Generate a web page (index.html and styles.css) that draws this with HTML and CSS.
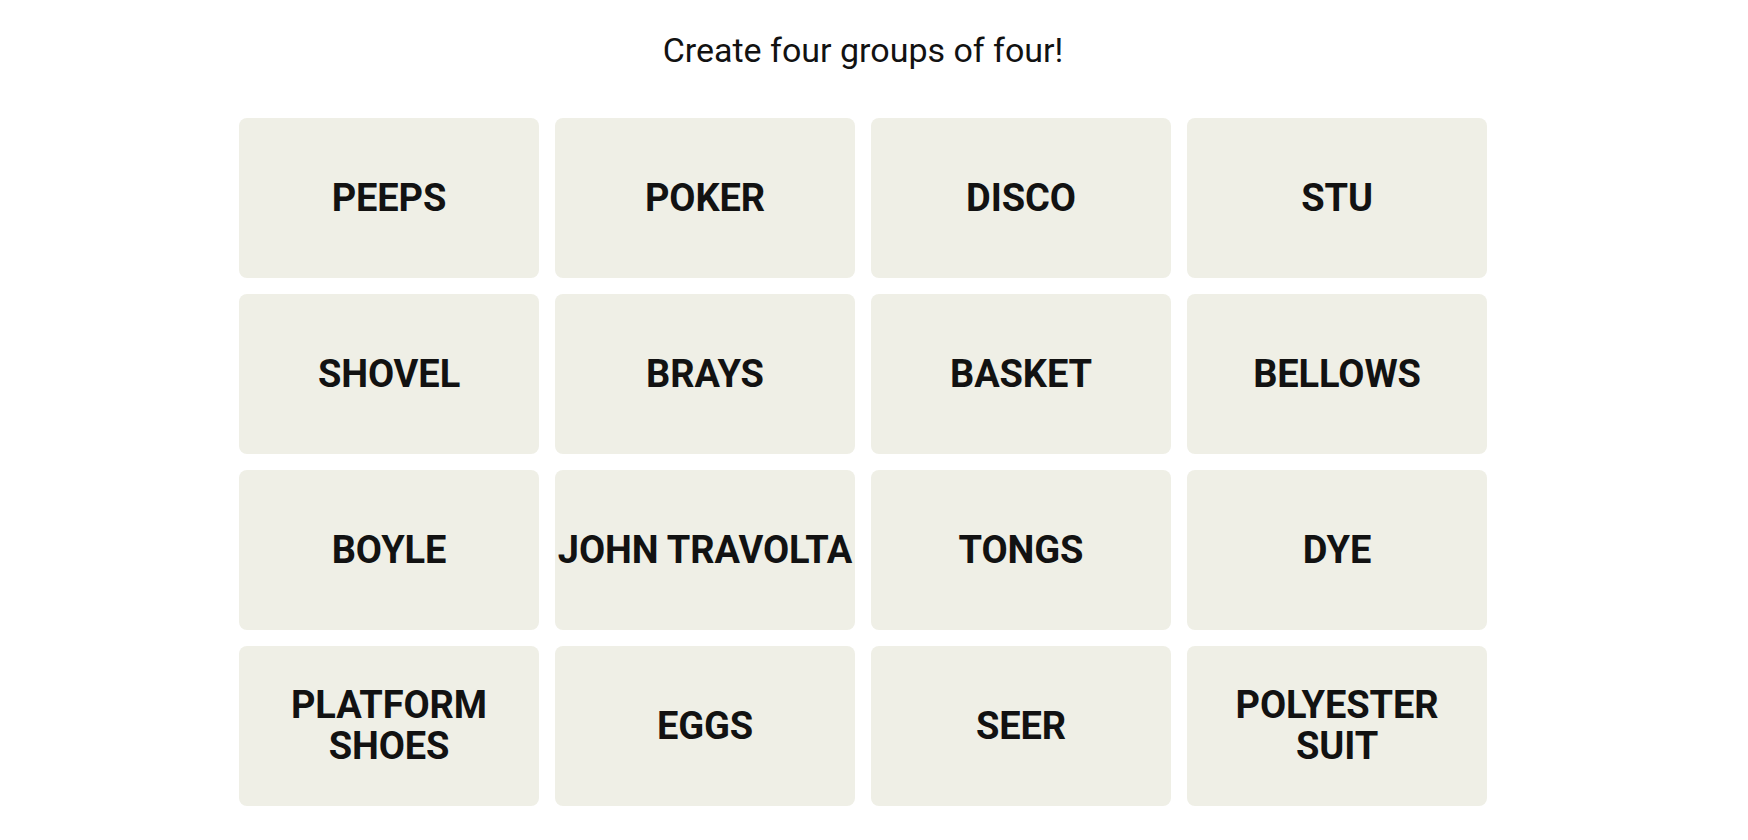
FILE: index.html
```html
<!DOCTYPE html>
<html>
<head>
<meta charset="utf-8">
<link rel="stylesheet" href="styles.css">
</head>
<body>
<main class="game">
  <h2 class="prompt">Create four groups of four!</h2>
  <div class="board">
    <button class="tile">PEEPS</button>
    <button class="tile">POKER</button>
    <button class="tile">DISCO</button>
    <button class="tile">STU</button>
    <button class="tile">SHOVEL</button>
    <button class="tile">BRAYS</button>
    <button class="tile">BASKET</button>
    <button class="tile">BELLOWS</button>
    <button class="tile">BOYLE</button>
    <button class="tile">JOHN TRAVOLTA</button>
    <button class="tile">TONGS</button>
    <button class="tile">DYE</button>
    <button class="tile">PLATFORM<br>SHOES</button>
    <button class="tile">EGGS</button>
    <button class="tile">SEER</button>
    <button class="tile">POLYESTER<br>SUIT</button>
  </div>
</main>
</body>
</html>
```
FILE: styles.css
```css
html, body {
  margin: 0;
  padding: 0;
  background: #ffffff;
}
.game {
  width: 1248px;
  margin-left: 239px;
  padding-top: 28px;
}
.prompt {
  margin: 0;
  text-align: center;
  font-family: Roboto, "Liberation Sans", sans-serif;
  font-weight: 400;
  font-size: 34px;
  line-height: 44px;
  color: #121212;
}
.board {
  margin-top: 46px;
  display: grid;
  grid-template-columns: repeat(4, 300px);
  grid-auto-rows: 160px;
  gap: 16px;
}
.tile {
  border: none;
  border-radius: 8px;
  background: #efefe6;
  color: #121212;
  font-family: Roboto, "Liberation Sans", sans-serif;
  font-weight: 700;
  font-size: 38px;
  line-height: 41px;
  letter-spacing: -0.1px;
  padding: 0;
  display: flex;
  align-items: center;
  justify-content: center;
  text-align: center;
}
```
